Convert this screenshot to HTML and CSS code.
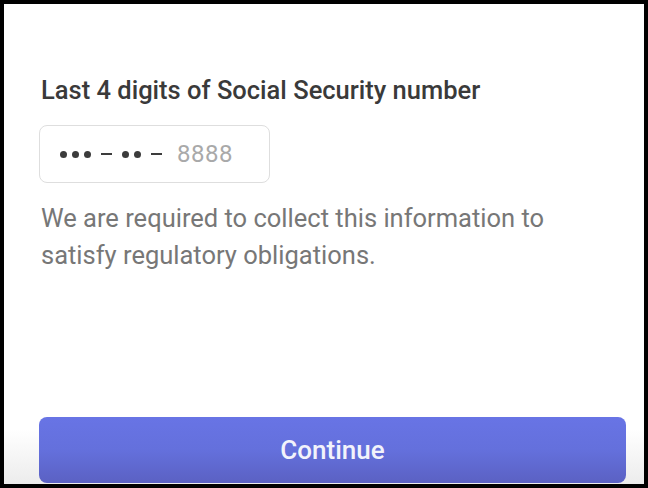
FILE: index.html
```html
<!DOCTYPE html>
<html lang="en">
<head>
<meta charset="utf-8">
<title>SSN</title>
<link rel="stylesheet" href="styles.css">
</head>
<body>
<div class="frame">
  <div class="screen">
    <div class="content">
      <h1 class="label">Last 4 digits of Social Security number</h1>
      <div class="field">
        <span class="mask">
          <span class="dot"></span><span class="dot"></span><span class="dot"></span>
          <span class="dash"></span>
          <span class="dot"></span><span class="dot"></span>
          <span class="dash"></span>
        </span>
        <span class="placeholder">8888</span>
      </div>
      <p class="help">We are required to collect this information to satisfy regulatory obligations.</p>
    </div>
    <div class="footer">
      <button class="continue">Continue</button>
    </div>
  </div>
</div>
</body>
</html>
```
FILE: styles.css
```css
html, body {
  margin: 0;
  padding: 0;
  background: #000;
}
body {
  width: 648px;
  height: 488px;
  overflow: hidden;
  font-family: Roboto, "Liberation Sans", Arial, sans-serif;
}
.frame {
  padding: 4px;
  box-sizing: border-box;
  width: 648px;
  height: 488px;
}
.screen {
  width: 640px;
  height: 480px;
  background: #fff;
  display: flex;
  flex-direction: column;
}
.content {
  padding: 71px 20px 0 37px;
}
.label {
  margin: 0;
  font-size: 25.5px;
  line-height: 30px;
  font-weight: 500;
  color: #3a3a3a;
}
.field {
  margin-top: 20px;
  margin-left: -2px;
  width: 231px;
  height: 58px;
  box-sizing: border-box;
  border: 1.5px solid #dedede;
  border-radius: 8px;
  display: flex;
  align-items: center;
  padding-left: 20px;
}
.mask {
  display: flex;
  align-items: center;
  gap: 5px;
}
.dot {
  width: 7px;
  height: 7px;
  border-radius: 50%;
  background: #3c3c3c;
}
.dash {
  width: 11px;
  height: 2.5px;
  background: #3c3c3c;
  margin: 0 5px;
}
.placeholder {
  margin-left: 10px;
  font-size: 24px;
  color: #a9a9a9;
  letter-spacing: 0.5px;
}
.help {
  margin: 17px 0 0 0;
  font-size: 25.5px;
  line-height: 37px;
  color: #777;
  max-width: 560px;
}
.footer {
  margin-top: auto;
  padding: 0 14px 1px 35px;
  height: 54px;
  display: flex;
  align-items: flex-end;
  background: linear-gradient(to bottom, #fff 0%, #ececec 100%);
}
.continue {
  width: 587px;
  height: 66px;
  border: none;
  border-radius: 8px;
  background: linear-gradient(to bottom, #6874e5 0%, #6470dc 50%, #5b61c3 100%);
  color: #f2f3fb;
  font-family: Roboto, "Liberation Sans", Arial, sans-serif;
  font-size: 26px;
  font-weight: 500;
  padding: 0;
  margin: 0;
}
```
